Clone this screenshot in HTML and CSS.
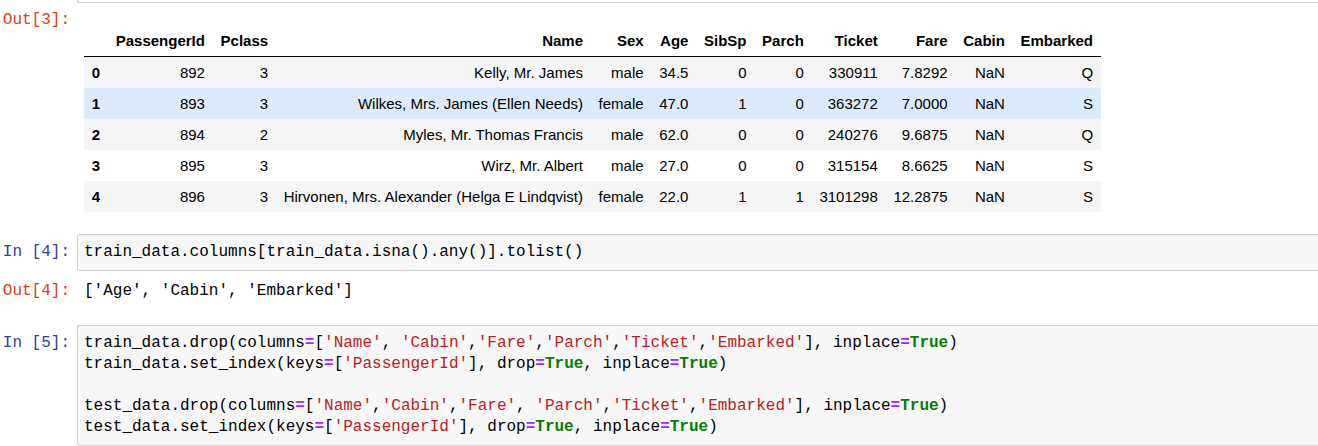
FILE: index.html
```html
<!DOCTYPE html>
<html>
<head>
<meta charset="utf-8">
<link rel="stylesheet" href="styles.css">
</head>
<body>
<div class="nb">
  <div class="row prev">
    <div class="prompt"></div>
    <div class="box prev-box"></div>
  </div>

  <div class="row out3">
    <div class="prompt out">Out[3]:</div>
    <div class="subarea table-area">
      <table class="df">
        <thead>
          <tr><th></th><th>PassengerId</th><th>Pclass</th><th>Name</th><th>Sex</th><th>Age</th><th>SibSp</th><th>Parch</th><th>Ticket</th><th>Fare</th><th>Cabin</th><th>Embarked</th></tr>
        </thead>
        <tbody>
          <tr><th>0</th><td>892</td><td>3</td><td>Kelly, Mr. James</td><td>male</td><td>34.5</td><td>0</td><td>0</td><td>330911</td><td>7.8292</td><td>NaN</td><td>Q</td></tr>
          <tr class="hover"><th>1</th><td>893</td><td>3</td><td>Wilkes, Mrs. James (Ellen Needs)</td><td>female</td><td>47.0</td><td>1</td><td>0</td><td>363272</td><td>7.0000</td><td>NaN</td><td>S</td></tr>
          <tr><th>2</th><td>894</td><td>2</td><td>Myles, Mr. Thomas Francis</td><td>male</td><td>62.0</td><td>0</td><td>0</td><td>240276</td><td>9.6875</td><td>NaN</td><td>Q</td></tr>
          <tr><th>3</th><td>895</td><td>3</td><td>Wirz, Mr. Albert</td><td>male</td><td>27.0</td><td>0</td><td>0</td><td>315154</td><td>8.6625</td><td>NaN</td><td>S</td></tr>
          <tr><th>4</th><td>896</td><td>3</td><td>Hirvonen, Mrs. Alexander (Helga E Lindqvist)</td><td>female</td><td>22.0</td><td>1</td><td>1</td><td>3101298</td><td>12.2875</td><td>NaN</td><td>S</td></tr>
        </tbody>
      </table>
    </div>
  </div>

  <div class="row in4">
    <div class="prompt in">In&nbsp;[4]:</div>
    <div class="box code"><pre>train_data.columns[train_data.isna().any()].tolist()</pre></div>
  </div>

  <div class="row out4">
    <div class="prompt out">Out[4]:</div>
    <div class="subarea text-out"><pre>['Age', 'Cabin', 'Embarked']</pre></div>
  </div>

  <div class="row in5">
    <div class="prompt in">In&nbsp;[5]:</div>
    <div class="box code"><pre>train_data.drop(columns<span class="op">=</span>[<span class="s">'Name'</span>, <span class="s">'Cabin'</span>,<span class="s">'Fare'</span>,<span class="s">'Parch'</span>,<span class="s">'Ticket'</span>,<span class="s">'Embarked'</span>], inplace<span class="op">=</span><span class="kw">True</span>)
train_data.set_index(keys<span class="op">=</span>[<span class="s">'PassengerId'</span>], drop<span class="op">=</span><span class="kw">True</span>, inplace<span class="op">=</span><span class="kw">True</span>)

test_data.drop(columns<span class="op">=</span>[<span class="s">'Name'</span>,<span class="s">'Cabin'</span>,<span class="s">'Fare'</span>, <span class="s">'Parch'</span>,<span class="s">'Ticket'</span>,<span class="s">'Embarked'</span>], inplace<span class="op">=</span><span class="kw">True</span>)
test_data.set_index(keys<span class="op">=</span>[<span class="s">'PassengerId'</span>], drop<span class="op">=</span><span class="kw">True</span>, inplace<span class="op">=</span><span class="kw">True</span>)
</pre></div>
  </div>
</div>
</body>
</html>
```
FILE: styles.css
```css
html, body {
  margin: 0;
  padding: 0;
  background: #fff;
  overflow: hidden;
}
body {
  font-family: "Liberation Sans", Arial, sans-serif;
  color: #000;
}
.nb {
  width: 1340px;
}
.row {
  display: flex;
  align-items: flex-start;
}
.prompt {
  flex: 0 0 77px;
  width: 77px;
  box-sizing: border-box;
  padding-right: 7px;
  text-align: right;
  font-family: "Liberation Mono", "DejaVu Sans Mono", monospace;
  font-size: 16px;
  line-height: 21px;
  white-space: nowrap;
}
.prompt.in { color: #303F9F; }
.prompt.out { color: #D84315; }
.box {
  flex: 1 1 auto;
  border: 1px solid #cfcfcf;
  border-radius: 2px;
  background: #f7f7f7;
}
.prev-box {
  height: 2px;
  border-top: none;
  background: #fff;
  border-radius: 0 0 2px 2px;
}
pre {
  margin: 0;
  font-family: "Liberation Mono", "DejaVu Sans Mono", monospace;
  font-size: 16px;
  line-height: 21px;
  color: #000;
}
.code {
  padding: 7px 6px;
}
.in4 .prompt, .in5 .prompt { padding-top: 8px; }
.in4 { margin-top: 22px; }
.in5 { margin-top: 23px; }
.out3 .prompt { padding-top: 7px; }
.subarea {
  flex: 1 1 auto;
  padding-left: 7px;
}
.table-area {
  padding-top: 22px;
}
.out4 .prompt, .text-out { padding-top: 10px; }
.text-out { padding-left: 7px; }
.op { color: #AA22FF; font-weight: bold; }
.kw { color: #008000; font-weight: bold; }
.s { color: #BA2121; }

.df {
  border-collapse: collapse;
  border-spacing: 0;
  font-size: 15px;
  line-height: 17px;
  color: #000;
}
.df th, .df td {
  padding: 7px 7.8px;
  text-align: right;
  vertical-align: middle;
  white-space: nowrap;
  border: none;
}
.df th { font-weight: bold; }
.df tbody th { text-align: left; }
.df thead tr { border-bottom: 1px solid #000; }
.df tbody tr:nth-child(odd) { background: #f5f5f5; }
.df tbody tr.hover { background: #dbebfb; }
```
